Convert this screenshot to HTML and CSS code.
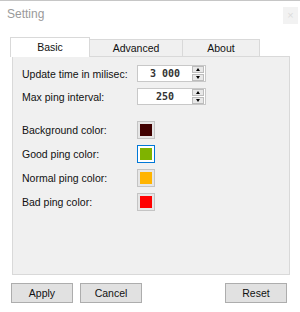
FILE: index.html
```html
<!DOCTYPE html>
<html lang="en">
<head>
    <meta charset="UTF-8">
    <meta name="viewport" content="width=device-width, initial-scale=1.0">
    <title>Setting</title>
    <link rel="stylesheet" href="styles.css">
</head>
<body>
    <div class="window">
        <div class="titlebar">
            <span class="title">Setting</span>
            <span class="close">&times;</span>
        </div>
        <div class="tabs">
            <div class="tab tab-basic active">Basic</div>
            <div class="tab tab-advanced">Advanced</div>
            <div class="tab tab-about">About</div>
        </div>
        <div class="panel">
            <div class="row">
                <label>Update time in milisec:</label>
                <div class="spin">
                    <span class="value">3 000</span>
                    <div class="arrows">
                        <span class="arrow"><i class="up"></i></span>
                        <span class="arrow"><i class="down"></i></span>
                    </div>
                </div>
            </div>
            <div class="row">
                <label>Max ping interval:</label>
                <div class="spin">
                    <span class="value">250</span>
                    <div class="arrows">
                        <span class="arrow"><i class="up"></i></span>
                        <span class="arrow"><i class="down"></i></span>
                    </div>
                </div>
            </div>
            <div class="colors">
                <div class="crow">
                    <label>Background color:</label>
                    <span class="swatch"><i class="c-bg"></i></span>
                </div>
                <div class="crow">
                    <label>Good ping color:</label>
                    <span class="swatch focus"><i class="c-good"></i></span>
                </div>
                <div class="crow">
                    <label>Normal ping color:</label>
                    <span class="swatch"><i class="c-normal"></i></span>
                </div>
                <div class="crow">
                    <label>Bad ping color:</label>
                    <span class="swatch"><i class="c-bad"></i></span>
                </div>
            </div>
        </div>
        <div class="buttons">
            <button class="btn">Apply</button>
            <button class="btn btn-cancel">Cancel</button>
            <span class="spacer"></span>
            <button class="btn">Reset</button>
        </div>
    </div>
</body>
</html>
```

FILE: styles.css
```css
* {
    margin: 0;
    padding: 0;
    box-sizing: border-box;
}
body {
    background-color: #fff;
    font-family: "Liberation Sans", Arial, sans-serif;
    font-size: 10.5px;
    color: #111;
}
.window {
    width: 300px;
    height: 312px;
    border-top: 1px solid #c6c6c6;
}
.titlebar {
    height: 35px;
    display: flex;
    justify-content: space-between;
    align-items: flex-start;
    padding: 5px 2px 0 7px;
}
.title {
    font-size: 12px;
    line-height: 16px;
    color: #9a9a9a;
}
.close {
    width: 15px;
    height: 17px;
    margin-top: 1px;
    background-color: #f2f2f2;
    color: #dcdcdc;
    font-size: 11px;
    line-height: 17px;
    text-align: center;
}
.tabs {
    display: flex;
    align-items: flex-end;
    height: 20px;
    margin-left: 10px;
}
.tab {
    height: 17px;
    line-height: 16px;
    text-align: center;
    background-color: #f0f0f0;
    border: 1px solid #d9d9d9;
    border-bottom: none;
    margin-left: -1px;
}
.tab.active {
    height: 20px;
    line-height: 19px;
    margin-left: 0;
    margin-bottom: -1px;
    background-color: #fff;
    position: relative;
    z-index: 1;
}
.tab-basic {
    width: 80px;
}
.tab-advanced {
    width: 94px;
}
.tab-about {
    width: 78px;
}
.panel {
    height: 219px;
    margin: 0 10px 0 12px;
    padding: 8px 0 0 9px;
    background-color: #f0f0f0;
    border: 1px solid #d9d9d9;
}
.row {
    display: flex;
    align-items: center;
    height: 17px;
}
.row + .row {
    margin-top: 6px;
}
.row label, .crow label {
    width: 115px;
}
.spin {
    display: flex;
    width: 69px;
    height: 17px;
    background-color: #fff;
    border: 1px solid #c8c8c8;
}
.value {
    flex: 1;
    text-align: center;
    line-height: 15px;
    font-family: "DejaVu Sans Mono", "Liberation Mono", monospace;
    font-weight: bold;
    font-size: 10px;
    color: #333;
}
.arrows {
    display: flex;
    flex-direction: column;
    justify-content: space-between;
    width: 13px;
    padding: 0 1px 0 0;
}
.arrow {
    display: flex;
    align-items: center;
    justify-content: center;
    height: 7px;
    background-color: #e8e8e8;
    border: 1px solid #bcbcbc;
}
.up, .down {
    width: 0;
    height: 0;
    border-left: 2.5px solid transparent;
    border-right: 2.5px solid transparent;
}
.up {
    border-bottom: 3px solid #000;
}
.down {
    border-top: 3px solid #000;
}
.colors {
    margin-top: 13px;
}
.crow {
    display: flex;
    align-items: center;
    height: 24px;
}
.swatch {
    width: 18px;
    height: 18px;
    padding: 2px;
    background-color: #e6e6e6;
    border: 1px solid #c4c4c4;
}
.swatch.focus {
    border-color: #0078d7;
    background-color: #fff;
}
.swatch i {
    display: block;
    width: 100%;
    height: 100%;
}
.c-bg {
    background-color: #400000;
}
.c-good {
    background-color: #7fb300;
}
.c-normal {
    background-color: #ffb400;
}
.c-bad {
    background-color: #ff0000;
}
.buttons {
    display: flex;
    margin-top: 8px;
    padding: 0 13px 0 11px;
}
.spacer {
    flex: 1;
}
.btn {
    width: 62px;
    height: 20px;
    font-family: "Liberation Sans", Arial, sans-serif;
    font-size: 10.5px;
    color: #111;
    background-color: #e1e1e1;
    border: 1px solid #adadad;
}
.btn-cancel {
    margin-left: 7px;
}
```
